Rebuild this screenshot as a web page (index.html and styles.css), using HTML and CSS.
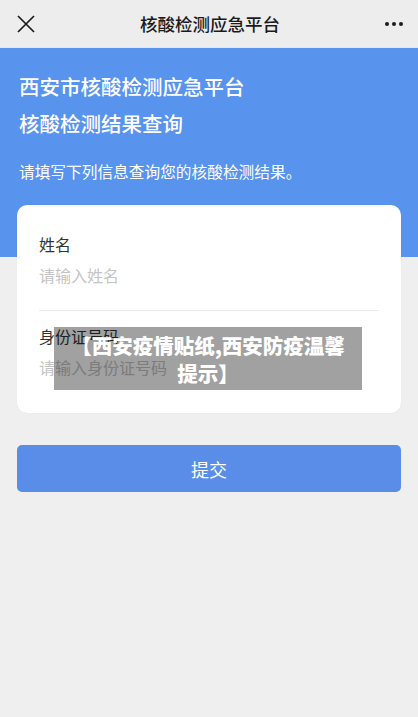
FILE: index.html
```html
<!DOCTYPE html>
<html lang="zh-CN">
<head>
    <meta charset="UTF-8">
    <meta name="viewport" content="width=device-width, initial-scale=1.0">
    <title>核酸检测应急平台</title>
    <link rel="stylesheet" href="styles.css">
</head>
<body>
    <header class="nav">
        <svg class="nav-close" width="18" height="18" viewBox="0 0 18 18">
            <path d="M1 1 L17 17 M17 1 L1 17" stroke="#1a1a1a" stroke-width="1.7" fill="none"/>
        </svg>
        <h1 class="nav-title">核酸检测应急平台</h1>
        <div class="nav-more"><span></span><span></span><span></span></div>
    </header>

    <section class="hero">
        <h2>西安市核酸检测应急平台</h2>
        <h3>核酸检测结果查询</h3>
        <p>请填写下列信息查询您的核酸检测结果。</p>
    </section>

    <main class="content">
        <form class="card">
            <div class="field">
                <label for="name">姓名</label>
                <input type="text" id="name" placeholder="请输入姓名">
            </div>
            <div class="field">
                <label for="idcard">身份证号码</label>
                <input type="text" id="idcard" placeholder="请输入身份证号码">
            </div>
            <div class="banner">【西安疫情贴纸,西安防疫温馨提示】</div>
        </form>

        <button class="submit" type="button">提交</button>
    </main>
</body>
</html>
```

FILE: styles.css
```css
* {
    box-sizing: border-box;
}

body {
    margin: 0;
    background: #efefef;
    font-family: "Noto Sans CJK SC", "Noto Sans", sans-serif;
    color: #333;
    min-height: 717px;
}

.nav {
    height: 48px;
    background: #ededed;
    display: flex;
    align-items: center;
    justify-content: space-between;
    padding: 0 15px 0 17px;
    border-bottom: 1px solid #e4e6ea;
}

.nav-close {
    width: 18px;
    height: 18px;
}

.nav-title {
    margin: 0;
    font-size: 17.5px;
    font-weight: 500;
    color: #1a1a1a;
}

.nav-more {
    display: flex;
    gap: 3px;
    width: 18px;
}

.nav-more span {
    width: 4px;
    height: 4px;
    border-radius: 50%;
    background: #1a1a1a;
}

.hero {
    background: #5893ee;
    color: #fff;
    padding: 23px 19px 0;
    height: 209px;
}

.hero h2 {
    margin: 0;
    font-size: 20.5px;
    font-weight: 500;
    line-height: 30px;
}

.hero h3 {
    margin: 7px 0 0;
    font-size: 20.5px;
    font-weight: 500;
    line-height: 30px;
}

.hero p {
    margin: 23px 0 0;
    font-size: 15.7px;
    line-height: 22px;
}

.content {
    padding: 0 17px;
    margin-top: -52px;
}

.card {
    position: relative;
    background: #fff;
    border-radius: 10px;
    padding: 26px 22px 22px;
    height: 208px;
    box-shadow: 0 0 1px rgba(0, 0, 0, 0.1);
}

.field {
    display: flex;
    flex-direction: column;
}

.field + .field {
    padding-top: 12px;
}

.field:first-child {
    border-bottom: 1px solid #ececec;
    padding-bottom: 22px;
}

.field label {
    font-size: 16px;
    line-height: 26px;
    color: #333;
}

.field input {
    border: none;
    outline: none;
    padding: 0;
    margin-top: 5px;
    font: inherit;
    font-size: 16px;
    line-height: 26px;
    height: 26px;
    color: #333;
    background: transparent;
}

.field input::placeholder {
    color: #c4c4c4;
}

.banner {
    position: absolute;
    left: 37px;
    top: 122px;
    width: 308px;
    height: 63px;
    background: rgba(0, 0, 0, 0.37);
    color: #fff;
    font-size: 20.5px;
    font-weight: 900;
    line-height: 28px;
    text-align: center;
    padding: 4px 16px 0;
}

.submit {
    display: block;
    width: 100%;
    margin-top: 32px;
    height: 47px;
    border: none;
    border-radius: 5px;
    background: #5a8de8;
    color: #fff;
    font: inherit;
    font-size: 18px;
}
```
